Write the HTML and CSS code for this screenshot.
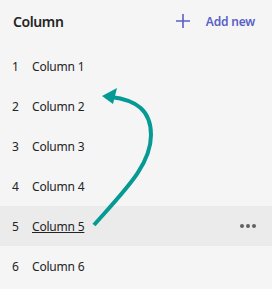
FILE: index.html
```html
<!DOCTYPE html>
<html lang="en">
<head>
    <meta charset="UTF-8">
    <title>Columns</title>
    <link rel="stylesheet" href="styles.css">
</head>
<body>
    <div class="panel">
        <div class="header">
            <span class="title">Column</span>
            <button class="add-btn">
                <svg width="16" height="16" viewBox="0 0 16 16">
                    <path d="M8 1v14M1 8h14" stroke="#5b5fc7" stroke-width="1.6" fill="none"/>
                </svg>
                <span>Add new</span>
            </button>
        </div>

        <ul class="col-list">
            <li class="col-row"><span class="num">1</span><span class="name">Column 1</span></li>
            <li class="col-row"><span class="num">2</span><span class="name">Column 2</span></li>
            <li class="col-row"><span class="num">3</span><span class="name">Column 3</span></li>
            <li class="col-row"><span class="num">4</span><span class="name">Column 4</span></li>
            <li class="col-row active">
                <span class="num">5</span><span class="name">Column 5</span>
                <span class="more"><i></i><i></i><i></i></span>
            </li>
            <li class="col-row"><span class="num">6</span><span class="name">Column 6</span></li>
        </ul>

        <!-- drag hint arrow -->
        <svg class="drag-arrow" width="272" height="289" viewBox="0 0 272 289">
            <path d="M94 225 C 125 190, 151 165, 151 135 C 151 110, 136 100, 111 97" stroke="#079a94" stroke-width="4" fill="none"/>
            <path d="M102 96 L 117 88 L 113 104 Z" fill="#079a94"/>
        </svg>
    </div>
</body>
</html>
```

FILE: styles.css
```css
body {
    margin: 0;
    background: #f5f5f5;
    font-family: "Noto Sans", "Open Sans", sans-serif;
    color: #242424;
}

.panel {
    position: relative;
    width: 272px;
    height: 289px;
}

.header {
    display: flex;
    justify-content: space-between;
    align-items: center;
    height: 42px;
    padding: 0 17px 4px 13px;
}

.title {
    font-size: 14px;
    font-weight: 600;
    letter-spacing: -0.4px;
}

.add-btn {
    display: flex;
    align-items: center;
    gap: 15px;
    background: none;
    border: none;
    padding: 0;
    color: #5b5fc7;
    font-family: inherit;
    font-size: 12px;
    font-weight: 600;
    letter-spacing: -0.2px;
}

.col-list {
    list-style: none;
    margin: 0;
    padding: 0;
}

.col-row {
    display: flex;
    align-items: center;
    height: 40px;
    padding: 0 16px 0 12px;
    font-size: 12px;
    letter-spacing: -0.2px;
}

.col-row .num {
    width: 20px;
}

.col-row.active {
    background: #ebebeb;
}

.col-row.active .name {
    text-decoration: underline;
}

.more {
    margin-left: auto;
    display: flex;
    gap: 2px;
}

.more i {
    width: 4px;
    height: 4px;
    border-radius: 50%;
    background: #616161;
}

.drag-arrow {
    position: absolute;
    top: 0;
    left: 0;
}
```
